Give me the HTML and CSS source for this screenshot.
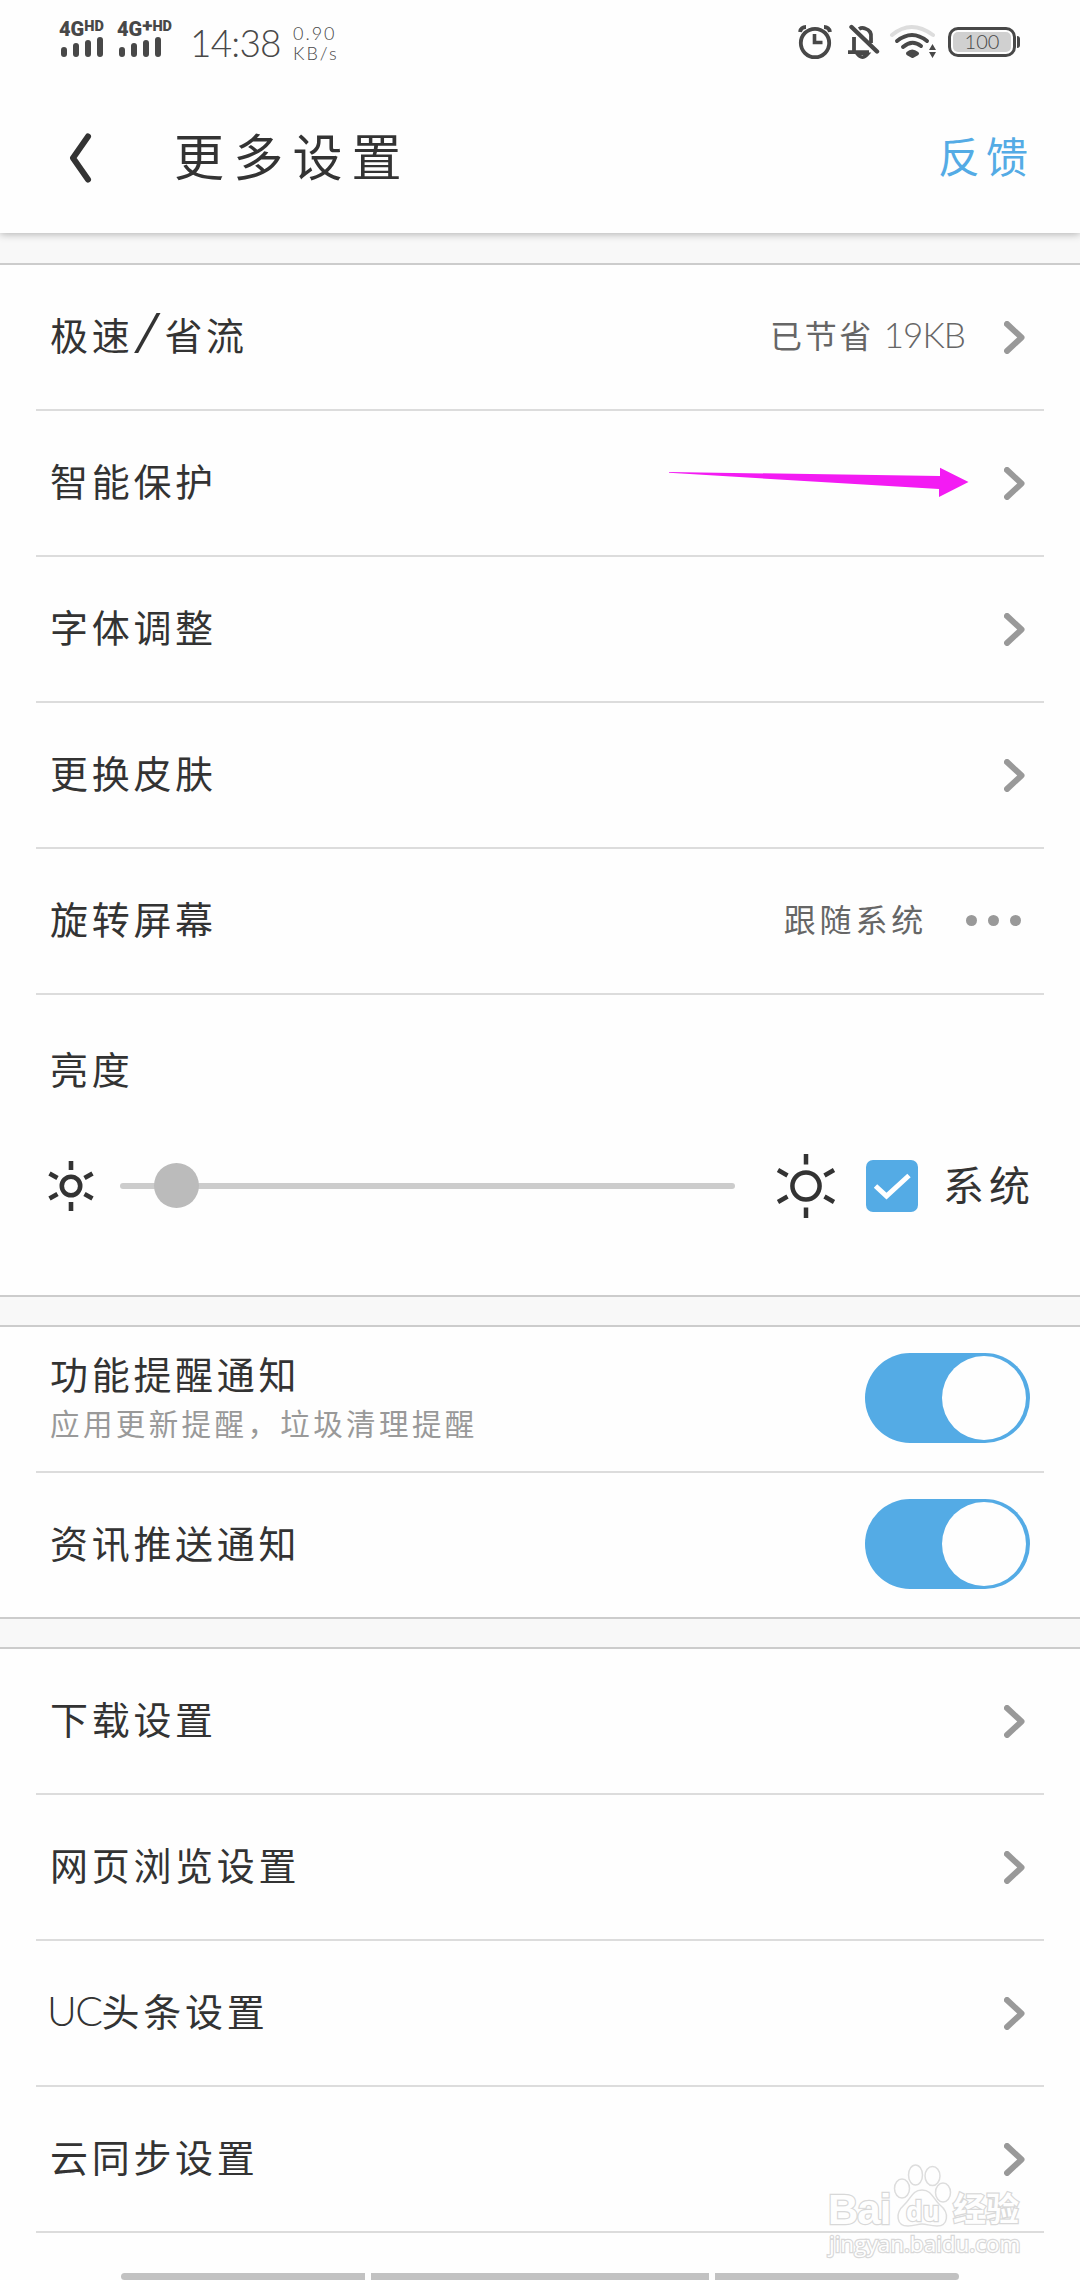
FILE: index.html
```html
<!DOCTYPE html>
<html lang="zh-CN">
<head>
  <meta charset="UTF-8" />
  <title>更多设置</title>
  <link rel="stylesheet" href="styles.css">
</head>
<body>
  <svg width="0" height="0" class="defs">
    <symbol id="arrow" viewBox="0 0 21 33"><path d="M3 3 L17.5 16.5 L3 30" fill="none" stroke="#999" stroke-width="6" stroke-linecap="round" stroke-linejoin="round"/></symbol>
    <symbol id="bars" viewBox="0 0 42 20"><path d="M3 13V17M15 9V17M27 6V17M39 3V17" stroke="#484848" stroke-width="6" stroke-linecap="round"/></symbol>
  </svg>

  <div class="statusbar">
    <div class="sim">
      <div class="net">4G<sup>HD</sup></div>
      <svg width="42" height="20"><use href="#bars"/></svg>
    </div>
    <div class="sim sim2">
      <div class="net">4G<sup class="plus">+</sup><sup>HD</sup></div>
      <svg width="42" height="20"><use href="#bars"/></svg>
    </div>
    <div class="time">14:38</div>
    <div class="speed"><span>0.90</span><span>KB/s</span></div>

    <div class="status-icons">
      <svg width="36" height="36" viewBox="797 24 36 36" fill="none" stroke="#484848">
        <circle cx="815" cy="43" r="14.2" stroke-width="3.8"/>
        <path d="M814.5 34V42.5H822.5" stroke-width="3.6"/>
        <path d="M800 32Q801 27 806 27M830 32Q829 27 824 27" stroke-width="3.8"/>
      </svg>
      <svg width="32" height="36" viewBox="848 24 32 36" fill="none" stroke="#484848">
        <path d="M854 52V37M859 29Q862 27 865 28.5Q872 30.5 871 38V43M848 52.2H869" stroke-width="3.8"/>
        <path d="M857 54Q862 61 868 54Z" stroke-width="3"/>
        <path d="M851.5 27L877 51.5" stroke-width="4.4" stroke-linecap="round"/>
      </svg>
      <svg width="47" height="36" viewBox="889 24 47 36" fill="none" stroke-width="4" stroke-linecap="round">
        <path d="M892 35Q911 19 933 35" stroke="#ddd"/>
        <path d="M897 41Q912 29 927 41M903 47Q912 39 921 46" stroke="#484848"/>
        <path d="M908 53.5Q912 49.5 917 53.5L912.5 56Z" fill="#484848" stroke="#484848" stroke-linejoin="round"/>
        <path d="M929 50L932.5 44L936 50ZM929 52L932.5 58L936 52Z" fill="#484848"/>
      </svg>
      <div class="battery">100</div>
    </div>
  </div>

  <div class="header">
    <svg class="back" width="24" height="52" viewBox="0 0 24 52"><path d="M20 4.5 L5 26 L20 47.5" fill="none" stroke="#333" stroke-width="6" stroke-linecap="round" stroke-linejoin="round"/></svg>
    <div class="title">更多设置</div>
    <div class="feedback">反馈</div>
  </div>

  <div class="section first">
    <div class="row"><span class="name">极速<span class="slash">/</span>省流</span><span class="value">已节省 <b>19KB</b></span><svg class="go"><use href="#arrow"/></svg></div>
    <div class="row"><span class="name">智能保护</span><svg class="go"><use href="#arrow"/></svg></div>
    <div class="row"><span class="name">字体调整</span><svg class="go"><use href="#arrow"/></svg></div>
    <div class="row"><span class="name">更换皮肤</span><svg class="go"><use href="#arrow"/></svg></div>
    <div class="row"><span class="name">旋转屏幕</span><span class="value follow">跟随系统</span>
      <div class="dots"><i></i><i></i><i></i></div>
    </div>
    <div class="brightness">
      <div class="name">亮度</div>
      <div class="controls">
        <svg class="sun-small" width="46" height="52" viewBox="-23 -26 46 52" fill="none" stroke="#333" stroke-width="4.6">
          <circle r="9.2"/>
          <path d="M0 -25V-16M0 16V25M-21.5 -12.5L-13.5 -8M21.5 12.5L13.5 8M-21.5 12.5L-13.5 8M21.5 -12.5L13.5 -8"/>
        </svg>
        <div class="track"><div class="thumb" style="left:9.3%"></div></div>
        <svg class="sun" width="60" height="66" viewBox="-30 -33 60 66" fill="none" stroke="#333" stroke-width="4.5">
          <circle r="13.6"/>
          <path d="M0 -32V-21.5M0 21.5V32M-28 -16L-18.5 -10.5M28 16L18.5 10.5M-28 16L-18.5 10.5M28 -16L18.5 -10.5"/>
        </svg>
        <div class="checkbox">
          <svg width="52" height="52"><path d="M9.5 26 L20.5 36 L43 15.5" fill="none" stroke="#fff" stroke-width="5"/></svg>
        </div>
        <div class="system">系统</div>
      </div>
    </div>
  </div>

  <div class="section">
    <div class="row">
      <div class="name">功能提醒通知<small>应用更新提醒，垃圾清理提醒</small></div>
      <div class="switch"></div>
    </div>
    <div class="row"><div class="name">资讯推送通知</div><div class="switch"></div></div>
  </div>

  <div class="section last">
    <div class="row"><span class="name">下载设置</span><svg class="go"><use href="#arrow"/></svg></div>
    <div class="row"><span class="name">网页浏览设置</span><svg class="go"><use href="#arrow"/></svg></div>
    <div class="row"><span class="name"><b>UC</b>头条设置</span><svg class="go"><use href="#arrow"/></svg></div>
    <div class="row"><span class="name">云同步设置</span><svg class="go"><use href="#arrow"/></svg></div>
    <div class="navbar"><i></i><i></i><i></i></div>
  </div>

  <svg class="pointer" width="300" height="32" viewBox="669 467 300 32">
    <path d="M669 472L940 476V467.7L968.5 482L939 497V489L669 472.8Z" fill="#f31bf3"/>
  </svg>

  <div class="watermark">
    <span class="bai">Bai</span>
    <svg class="paw" width="60" height="64" viewBox="893 2163 60 64" fill="#fefefe" stroke="#ddd" stroke-width="1.5">
      <ellipse cx="902" cy="2188.5" rx="7.5" ry="9.5"/>
      <ellipse cx="915.5" cy="2175" rx="7" ry="10"/>
      <ellipse cx="932.5" cy="2176" rx="7.5" ry="9.5"/>
      <ellipse cx="943" cy="2192.5" rx="7.5" ry="9.5"/>
      <path d="M922 2190C932 2190 933 2199 940 2205C950 2213 948 2226 937 2226C930 2226 927 2224 922 2224C917 2224 915 2226 908 2226C896 2226 895 2213 904 2205C911 2199 912 2190 922 2190Z"/>
    </svg>
    <span class="du">du</span>
    <span class="exp">经验</span>
    <span class="url">jingyan.baidu.com</span>
  </div>
</body>
</html>
```
FILE: styles.css
```css
* { box-sizing: border-box; }
body {
  margin: 0; width: 1080px; height: 2280px; overflow: hidden; position: relative;
  background: #f8f8f8; color: #333;
  font-family: "Noto Sans CJK SC", sans-serif; font-weight: 400;
}
.defs { display: block; }
b { font-family: Lato, sans-serif; font-weight: 300; }

/* status bar */
.statusbar {
  height: 80px; padding-left: 59px; background: #fefefe; color: #484848;
  display: flex; align-items: flex-start; font-family: Lato, sans-serif; font-weight: 300;
  position: relative; z-index: 1;
}
.sim { width: 58px; padding-top: 20px; }
.sim svg { display: block; margin-left: 2px; }
.sim2 { width: 73px; }
.net {
  height: 17px; display: flex; font: 900 20px/18px Roboto, sans-serif; white-space: nowrap;
}
.net sup { font-size: 14.5px; line-height: 14px; vertical-align: top; margin-left: 0; }
.net .plus { font-size: 19px; line-height: 11px; margin-left: 0; }
.time { font-size: 37px; line-height: 37px; width: 103px; padding-top: 24px; letter-spacing: -0.8px; white-space: nowrap; }
.speed { padding-top: 23px; font-size: 18px; line-height: 20px; }
.speed span { display: block; letter-spacing: 2px; }
.status-icons { margin-left: auto; padding: 24px 64px 0 0; display: flex; gap: 15px; }
.status-icons svg:nth-child(3) { margin-left: -6px; }
.battery {
  width: 68px; height: 30px; margin: 3px 0 0 -3px; position: relative;
  border: 3px solid #484848; border-radius: 10px; padding: 2px;
  background: #d0d0d0 content-box; font-size: 20px; line-height: 19px; text-align: center;
}
.battery::after {
  content: ""; position: absolute; right: -7px; top: 6px; width: 3px; height: 12px;
  background: #484848; border-radius: 0 3px 3px 0;
}

/* header */
.header {
  height: 153px; padding: 0 50px 0 68px; background: #fefefe; position: relative;
  display: flex; align-items: center;
  box-shadow: 0 1px 8px rgba(0,0,0,0.3);
}
.back { margin-top: 2px; }
.title { margin: -6px 0 0 82px; font-size: 50px; letter-spacing: 9.2px; }
.feedback { margin: -4px -4px 0 auto; font-size: 42px; letter-spacing: 6px; color: #54abe5; }

/* list */
.section {
  margin-bottom: 28px; background: #fefefe;
  border-top: 2px solid #ccc; border-bottom: 2px solid #ccc;
}
.first { margin-top: 30px; }
.last { margin-bottom: 0; border-bottom: none; }
.row {
  height: 146px; margin: 0 36px; padding: 0 19px 0 14px;
  border-bottom: 2px solid #dcdcdc; display: flex; align-items: center;
}
.section:not(.last) .row:last-child { border-bottom: none; height: 144px; }
.name { flex: 1; margin-top: -6px; font-size: 38px; line-height: 50px; letter-spacing: 3.7px; }
.name b { font-size: 41px; letter-spacing: -1.5px; margin-left: -3px; }
.name small {
  display: block; font-size: 29.5px; line-height: 44px; margin-top: 2px; letter-spacing: 3.4px;
  color: #999;
}
.slash {
  display: inline-block; width: 31px; font: 300 52px/40px Roboto, sans-serif;
  transform: scaleX(1.45); transform-origin: left; letter-spacing: 0;
}
.value { margin: -6px 39px 0 0; font-size: 32px; letter-spacing: 2.6px; color: #666; }
.value b { font-size: 35px; letter-spacing: -0.9px; }
.follow { letter-spacing: 3.8px; }
.go { width: 21px; height: 33px; flex: none; }
.dots { display: flex; gap: 11px; margin: -2px 4px 0 0; }
.dots i { width: 11px; height: 11px; border-radius: 50%; background: #999; }

/* brightness */
.brightness { height: 300px; padding: 54px 40px 0 50px; }
.controls { display: flex; align-items: center; height: 66px; margin: 60px 0 0 -2px; }
.sun-small { flex: none; }
.track {
  flex: none; width: 615px; height: 6px; margin: -1px 0 0 26px; border-radius: 3px;
  background: #ccc; position: relative;
}
.thumb {
  position: absolute; top: -20px; width: 45px; height: 45px; margin-left: -23px;
  border-radius: 50%; background: #bbb;
}
.sun { margin-left: 41px; flex: none; }
.checkbox { width: 52px; height: 52px; margin-left: 30px; border-radius: 7px; background: #54abe5; flex: none; }
.system { margin: -6px 0 0 25px; font-size: 41px; letter-spacing: 5px; white-space: nowrap; }

/* switches */
.switch {
  width: 165px; height: 90px; margin: -2px -5px 0 0; padding: 3px 4px;
  border-radius: 45px; background: #54abe5; display: flex; justify-content: flex-end;
}
.switch::after { content: ""; width: 84px; height: 84px; border-radius: 50%; background: #fefefe; }

/* bottom */
.navbar { height: 47px; padding: 40px 121px 0; display: flex; gap: 6px; }
.navbar i { background: #c2c2c2; width: 244px; }
.navbar i:first-child { border-radius: 4px 0 0 4px; }
.navbar i:nth-child(2) { width: 338px; }
.navbar i:last-child { border-radius: 0 4px 4px 0; }

/* overlays */
.pointer { position: absolute; left: 669px; top: 467px; }
.watermark { position: absolute; left: 826px; top: 2160px; width: 200px; height: 100px; color: #fefefe; }
.watermark span { position: absolute; white-space: nowrap; -webkit-text-stroke: 2.4px #d8d8d8; paint-order: stroke fill; }
.bai { left: 2px; top: 29px; font: bold 42px/42px "Liberation Sans", sans-serif; letter-spacing: -1px; }
.paw { position: absolute; left: 67px; top: 3px; }
.du { left: 80px; top: 34px; font: bold 26px/34px "Open Sans", sans-serif; }
.exp { left: 127px; top: 25px; font-size: 33px; line-height: 44px; font-weight: 700; }
.url { left: 3px; top: 72px; font: 22.5px/24px "Open Sans", sans-serif; }
```
